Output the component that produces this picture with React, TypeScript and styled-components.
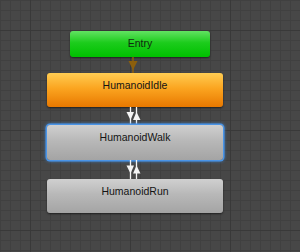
import React from "react";
import styled, { createGlobalStyle } from "styled-components";

type Kind = "entry" | "idle" | "state";

const GlobalStyle = createGlobalStyle`
  html, body {
    margin: 0;
    padding: 0;
    background: #474747;
  }
`;

const Canvas = styled.div`
  width: 300px;
  height: 252px;
  box-sizing: border-box;
  padding: 31px 0 0 47px;
  overflow: hidden;
  background-color: #474747;
  background-image:
    linear-gradient(to right, #393939 1px, transparent 1px),
    linear-gradient(to bottom, #393939 1px, transparent 1px),
    linear-gradient(to right, #404040 1px, transparent 1px),
    linear-gradient(to bottom, #404040 1px, transparent 1px);
  background-size: 100px 100px, 100px 100px, 10px 10px, 10px 10px;
  background-position: 30px 30px, 30px 30px, 0 0, 0 0;
  font-family: "Liberation Sans", Arial, sans-serif;
`;

const Graph = styled.div`
  display: flex;
  flex-direction: column;
  align-items: flex-start;
  width: 176px;
`;

const gradients: Record<Kind, string> = {
  entry: "linear-gradient(to bottom, #62e262 0%, #1ccc1c 45%, #00c000 100%)",
  idle: "linear-gradient(to bottom, #ffcc52 0%, #fba520 45%, #e87800 100%)",
  state: "linear-gradient(to bottom, #d0d0d0 0%, #b8b8b8 45%, #a4a4a4 100%)",
};

const Node = styled.div<{ $kind: Kind; $selected?: boolean; $h: number }>`
  box-sizing: border-box;
  width: ${(p) => (p.$kind === "entry" ? "140px" : "176px")};
  height: ${(p) => p.$h}px;
  margin-left: ${(p) => (p.$kind === "entry" ? "23px" : "0")};
  padding-top: 6px;
  border-radius: 3px;
  background: ${(p) => gradients[p.$kind]};
  color: ${(p) => (p.$kind === "entry" ? "#0f2a0f" : "#141414")};
  font-size: 10.5px;
  line-height: 13px;
  text-align: center;
  box-shadow: ${(p) =>
    p.$selected
      ? "0 0 0 1.5px #4a94e6, 0 0 3px 2px rgba(60,140,230,0.55)"
      : "0 1px 2px rgba(0,0,0,0.55)"};
`;

const Link = styled.svg<{ $h: number }>`
  display: block;
  width: 176px;
  height: ${(p) => p.$h}px;
  overflow: visible;
`;

const EntryLink = () => (
  <Link $h={16} viewBox="0 0 176 16">
    <line x1={86} y1={0} x2={86} y2={16} stroke="#8c5f0c" strokeWidth={1.5} />
    <polygon points="81.5,4 90.5,4 86,13" fill="#8c5f0c" />
  </Link>
);

const TwoWayLink = ({ h }: { h: number }) => {
  const m = h / 2;
  return (
    <Link $h={h} viewBox={`0 0 176 ${h}`}>
      <line x1={83.5} y1={0} x2={83.5} y2={h} stroke="#f4f4f4" strokeWidth={1.3} />
      <line x1={89.5} y1={0} x2={89.5} y2={h} stroke="#f4f4f4" strokeWidth={1.3} />
      <polygon points={`79.5,${m - 4} 87,${m - 4} 83.5,${m + 4}`} fill="#f4f4f4" />
      <polygon points={`86,${m + 4} 93.5,${m + 4} 89.5,${m - 4}`} fill="#f4f4f4" />
    </Link>
  );
};

export default function App() {
  return (
    <>
      <GlobalStyle />
      <Canvas>
        <Graph>
          <Node $kind="entry" $h={26}>Entry</Node>
          <EntryLink />
          <Node $kind="idle" $h={34}>HumanoidIdle</Node>
          <TwoWayLink h={18} />
          <Node $kind="state" $h={35} $selected>HumanoidWalk</Node>
          <TwoWayLink h={19} />
          <Node $kind="state" $h={34}>HumanoidRun</Node>
        </Graph>
      </Canvas>
    </>
  );
}
